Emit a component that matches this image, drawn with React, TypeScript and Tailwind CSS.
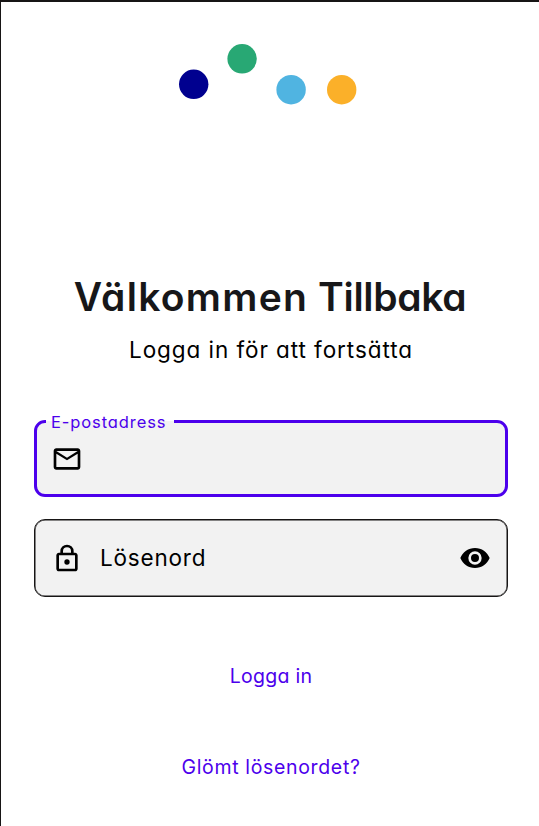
import type { ReactNode } from "react";

const FONT = "font-[Inter,'Noto_Sans',sans-serif] [font-feature-settings:'cv11','ss03']";

function Dots() {
  return (
    <svg className="mx-auto block" width="178" height="62" viewBox="0 0 178 62">
      <circle cx="14.7" cy="41.3" r="14.7" fill="#00008f" />
      <circle cx="63.1" cy="15.8" r="14.7" fill="#28a874" />
      <circle cx="112.1" cy="46.7" r="14.7" fill="#50b4e1" />
      <circle cx="162.7" cy="46.7" r="14.7" fill="#fbb029" />
    </svg>
  );
}

function Icon({ children, size = 32 }: { children: ReactNode; size?: number }) {
  return (
    <svg width={size} height={size} viewBox="0 0 24 24" fill="currentColor" className="shrink-0">
      {children}
    </svg>
  );
}

export default function App() {
  return (
    <main className={`flex h-[826px] w-full flex-col border-l border-t-2 border-[#171515] bg-white pt-[41px] text-black ${FONT}`}>
      <div className="pr-[4px]">
        <Dots />
      </div>
      <h1 className="mt-[167px] h-[50px] whitespace-nowrap text-center text-[39px] leading-[50px] font-semibold text-[#171719]">
        <span className="tracking-[1.3px]">Välkommen</span> <span className="tracking-[-0.3px]">Tillbaka</span>
      </h1>
      <p className="mt-[12px] h-[32px] whitespace-nowrap pl-[2px] text-center text-[22.5px] leading-[32px] tracking-[0.93px]">
        Logga in för att fortsätta
      </p>
      <form className="mt-[54px] mr-[31px] ml-[33px] flex flex-col">
        <div className="relative flex h-[77px] items-center rounded-[11px] border-3 border-[#4c00ec] bg-[#f2f2f2] pl-[14px]">
          <span className="absolute -top-[12px] left-[9px] h-[22px] w-[128px] whitespace-nowrap bg-linear-to-b from-white from-45% to-[#f2f2f2] to-45% pl-[5px] text-[16.5px] leading-[22px] tracking-[0.9px] text-[#4c00ec]">
            E-postadress
          </span>
          <Icon>
            <path d="M22 6c0-1.1-.9-2-2-2H4c-1.100 0-2 .9-2 2v12c0 1.100.9 2 2 2h16c1.100 0 2-.9 2-2V6zm-2 0-8 5-8-5h16zm0 12H4V8l8 5 8-5v10z" />
          </Icon>
        </div>
        <div className="mt-[22px] flex h-[78px] items-center rounded-[11px] border border-[#171515] bg-[#f2f2f2] pr-[16px] pl-[16px] shadow-[inset_0_0_0_0.5px_#171515]">
          <Icon>
            <path d="M12 17a2 2 0 1 0 0-4 2 2 0 0 0 0 4zm6-9h-1V7A5 5 0 0 0 7 7v1H6c-1.100 0-2 .9-2 2v10c0 1.100.9 2 2 2h12c1.100 0 2-.9 2-2V10c0-1.100-.9-2-2-2zM9 7a3 3 0 0 1 6 0v1H9V7zm9 13H6V10h12v10z" />
          </Icon>
          <span className="ml-[17px] flex-1 text-[22.5px] leading-[32px] tracking-[0.8px]">Lösenord</span>
          <Icon>
            <path d="M12 9a3 3 0 0 0 0 6 3 3 0 0 0 0-6m0 8a5 5 0 0 1 0-10 5 5 0 0 1 0 10m0-12.5C7 4.500 2.730 7.610 1 12c1.730 4.390 6 7.500 11 7.500s9.270-3.110 11-7.500c-1.730-4.390-6-7.500-11-7.500z" />
          </Icon>
        </div>
      </form>
      <button className="mx-auto mt-[64px] h-[30px] whitespace-nowrap pl-[2px] text-[19.5px] leading-[30px] tracking-[0.3px] text-[#4c00ec]">
        Logga in
      </button>
      <a className="mx-auto mt-[61px] h-[30px] whitespace-nowrap pl-[2px] text-[19.5px] leading-[30px] tracking-[0.66px] text-[#4c00ec]">
        Glömt lösenordet?
      </a>
    </main>
  );
}
